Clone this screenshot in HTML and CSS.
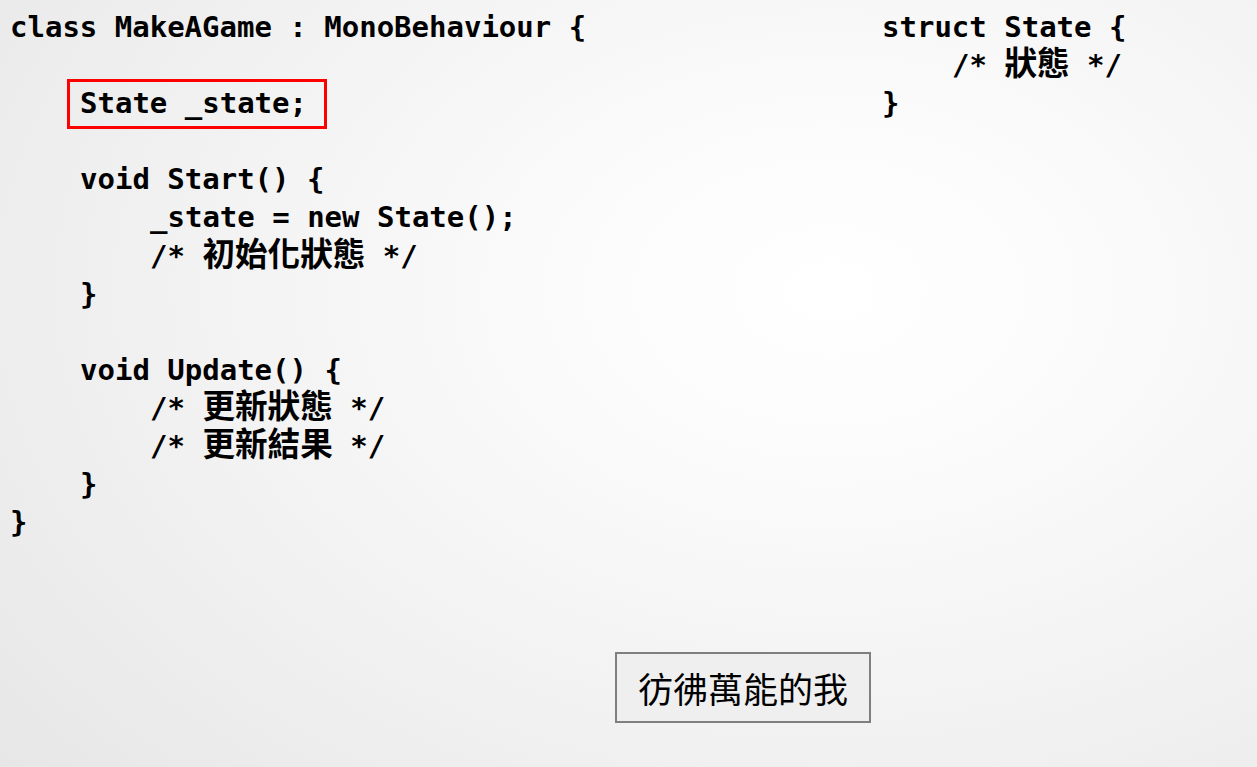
FILE: index.html
```html
<!DOCTYPE html>
<html lang="zh-Hant">
<head>
<meta charset="utf-8">
<title>MakeAGame</title>
<link rel="stylesheet" href="styles.css">
</head>
<body>
<div class="slide">
  <div class="code-row">
    <div class="code main">
      <div class="ln">class MakeAGame : MonoBehaviour {</div>
      <div class="ln"></div>
      <div class="ln i1"><span class="hl">State _state;</span></div>
      <div class="ln"></div>
      <div class="ln i1">void Start() {</div>
      <div class="ln i2">_state = new State();</div>
      <div class="ln i2"><span>/* </span><span class="cjk">初始化狀態</span><span> */</span></div>
      <div class="ln i1">}</div>
      <div class="ln"></div>
      <div class="ln i1">void Update() {</div>
      <div class="ln i2"><span>/* </span><span class="cjk">更新狀態</span><span> */</span></div>
      <div class="ln i2"><span>/* </span><span class="cjk">更新結果</span><span> */</span></div>
      <div class="ln i1">}</div>
      <div class="ln">}</div>
    </div>
    <div class="code side">
      <div class="ln">struct State {</div>
      <div class="ln i1"><span>/* </span><span class="cjk">狀態</span><span> */</span></div>
      <div class="ln">}</div>
    </div>
  </div>
  <div class="caption-row">
    <div class="caption">彷彿萬能的我</div>
  </div>
</div>
</body>
</html>
```

FILE: styles.css
```css
html, body {
  margin: 0;
  padding: 0;
}

body {
  width: 1257px;
  height: 767px;
  overflow: hidden;
}

.slide {
  width: 1257px;
  height: 767px;
  display: flex;
  flex-direction: column;
  background: radial-gradient(ellipse 85% 95% at 66% 38%, #ffffff 0%, #fbfbfb 25%, #f2f2f2 60%, #e7e7e7 100%);
}

.code-row {
  display: flex;
  padding: 8px 0 0 10px;
}

.code {
  font-family: "DejaVu Sans Mono", "Noto Sans CJK TC", monospace;
  font-weight: bold;
  font-size: 29px;
  line-height: 38.1px;
  color: #000;
}

.ln {
  height: 38.1px;
  white-space: pre;
}

.i1 {
  padding-left: 70px;
}

.i2 {
  padding-left: 140px;
}

.main {
  width: 872px;
  flex: none;
}

.cjk {
  font-family: "Noto Sans CJK TC", sans-serif;
  font-size: 32.6px;
  font-weight: bold;
  line-height: 0;
}

.hl {
  margin-left: -13px;
  margin-right: -17px;
  padding: 4px 17px 6px 10px;
  border: 3px solid #ff0000;
}

.caption-row {
  display: flex;
  padding-left: 615px;
  margin-top: 111px;
}

.caption {
  box-sizing: border-box;
  width: 256px;
  height: 71px;
  border: 2px solid #7f7f7f;
  background: #efefef;
  display: flex;
  align-items: center;
  justify-content: center;
  font-family: "Noto Sans CJK TC", sans-serif;
  font-size: 35px;
  color: #000;
}
```
